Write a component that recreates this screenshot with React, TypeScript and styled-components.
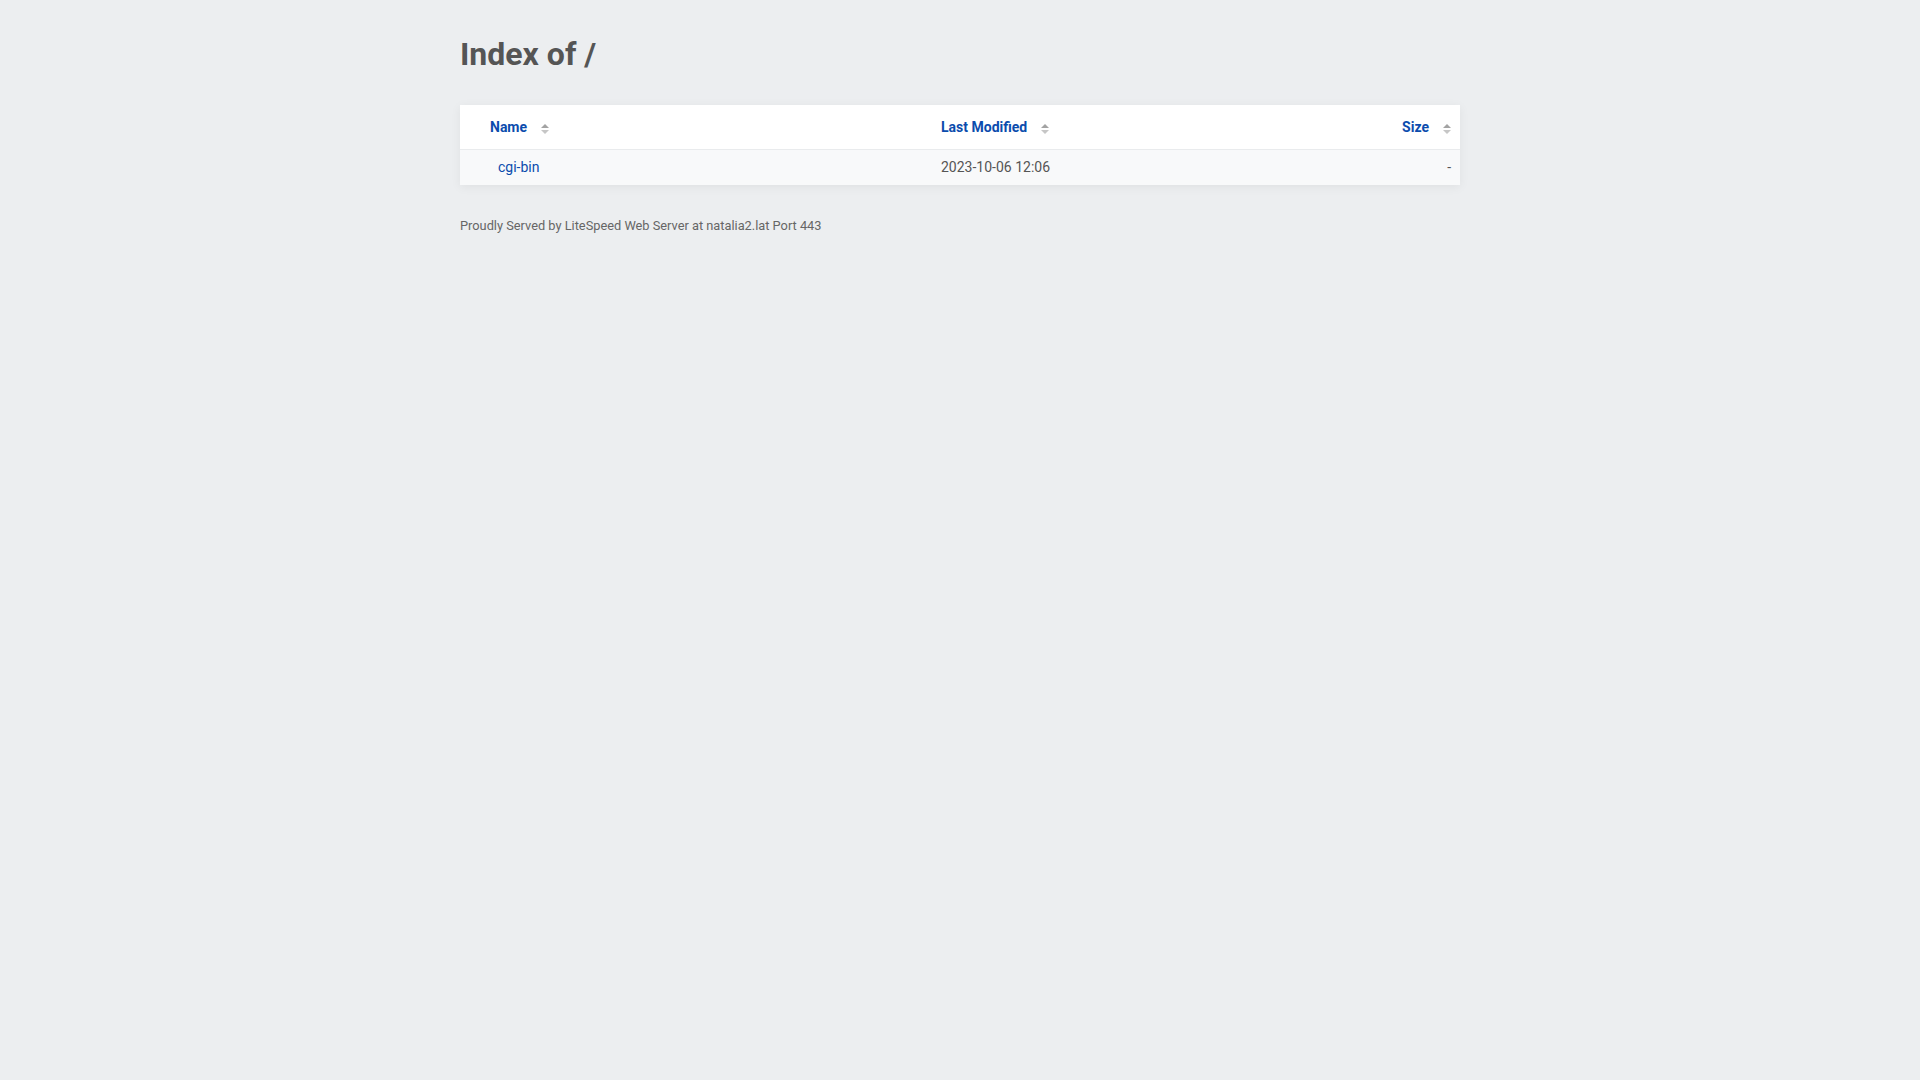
import React from "react";
import styled, { createGlobalStyle } from "styled-components";

const GlobalStyle = createGlobalStyle`
  html, body {
    margin: 0;
    padding: 0;
    background: #eceef0;
  }
  body {
    font-family: Roboto, "Liberation Sans", Arial, sans-serif;
    color: #555;
  }
`;

const Page = styled.main`
  max-width: 1000px;
  margin: 0 auto;
  padding-top: 36px;
`;

const Title = styled.h1`
  margin: 0 0 31px;
  font-size: 32px;
  line-height: 37.5px;
  font-weight: 700;
  color: #555;
`;

const Listing = styled.div`
  background: #fff;
  box-shadow: 0 2px 10px rgba(0, 0, 0, 0.06);
`;

const GridRow = styled.div<{ $head?: boolean }>`
  display: grid;
  grid-template-columns: 472px 1fr 160px;
  align-items: center;
  height: ${(p) => (p.$head ? "44px" : "35px")};
  background: ${(p) => (p.$head ? "#fff" : "#f8f9fa")};
  border-bottom: ${(p) => (p.$head ? "1px solid #e9ebed" : "none")};
  font-size: 14px;
  line-height: 16px;
`;

const Cell = styled.div<{ $pl?: number; $right?: boolean }>`
  display: flex;
  align-items: center;
  justify-content: ${(p) => (p.$right ? "flex-end" : "flex-start")};
  padding-left: ${(p) => p.$pl ?? 9}px;
  padding-right: ${(p) => (p.$right ? 9 : 0)}px;
  color: #555;
`;

const SortLink = styled.a`
  display: inline-flex;
  align-items: center;
  font-weight: 700;
  color: #0b4cad;
  text-decoration: none;
  cursor: pointer;
`;

const SortIcon = styled.svg`
  width: 8px;
  height: 10px;
  margin-left: 14px;
  margin-top: 4px;
  flex: none;
`;

const FileLink = styled.a`
  color: #0b4cad;
  text-decoration: none;
`;

const Footer = styled.address`
  margin-top: 33px;
  font-style: normal;
  font-size: 12.8px;
  line-height: 15px;
  color: #666;
`;

const Sort: React.FC<{ label: string }> = ({ label }) => (
  <SortLink href="#">
    {label}
    <SortIcon viewBox="0 0 8 10">
      <polygon points="0,4 4,0 8,4" fill="#a3a3a3" />
      <polygon points="0,6 8,6 4,10" fill="#c6c6c6" />
    </SortIcon>
  </SortLink>
);

export default function App() {
  return (
    <>
      <GlobalStyle />
      <Page>
        <Title>Index of /</Title>
        <Listing>
          <GridRow $head>
            <Cell $pl={30}>
              <Sort label="Name" />
            </Cell>
            <Cell>
              <Sort label="Last Modified" />
            </Cell>
            <Cell $right>
              <Sort label="Size" />
            </Cell>
          </GridRow>
          <GridRow>
            <Cell $pl={38}>
              <FileLink href="cgi-bin/">cgi-bin</FileLink>
            </Cell>
            <Cell>2023-10-06 12:06</Cell>
            <Cell $right>-</Cell>
          </GridRow>
        </Listing>
        <Footer>Proudly Served by LiteSpeed Web Server at natalia2.lat Port 443</Footer>
      </Page>
    </>
  );
}
